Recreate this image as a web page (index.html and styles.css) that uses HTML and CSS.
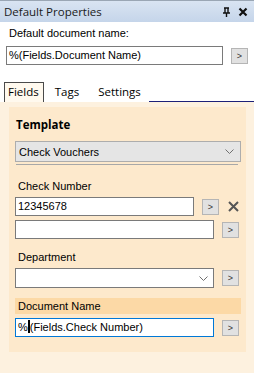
FILE: index.html
```html
<!DOCTYPE html>
<html>
<head>
<meta charset="utf-8">
<link rel="stylesheet" href="styles.css">
</head>
<body>
<div class="window">
  <div class="titlebar">
    <span class="title">Default Properties</span>
    <span class="title-icons">
      <svg class="pin" width="9" height="10" viewBox="0 0 9 10"><path d="M2 1h5M3 1v5M6 1v5M1 6h7M4.5 6v4" stroke="#111" stroke-width="1.4" fill="none"/></svg>
      <svg class="close" width="10" height="10" viewBox="0 0 10 10"><path d="M1.5 1.5l7 7M8.5 1.5l-7 7" stroke="#111" stroke-width="2.2"/></svg>
    </span>
  </div>
  <div class="top">
    <div class="top-label">Default document name:</div>
    <div class="row">
      <div class="input top-input">%(Fields.Document Name)</div>
      <div class="btn">&gt;</div>
    </div>
  </div>
  <div class="tabs">
    <div class="tab active">Fields</div>
    <div class="tab">Tags</div>
    <div class="tab">Settings</div>
    <div class="tab-line"></div>
  </div>
  <div class="page">
    <div class="panel">
      <div class="section-title">Template</div>
      <div class="select gray">
        <span>Check Vouchers</span>
        <svg width="9" height="5" viewBox="0 0 9 5"><path d="M0.5 0.5l4 4 4-4" stroke="#707070" fill="none"/></svg>
      </div>
      <div class="sep"></div>
      <div class="label first">Check Number</div>
      <div class="row">
        <div class="input short">12345678</div>
        <div class="btn">&gt;</div>
        <svg class="xicon" width="11" height="11" viewBox="0 0 11 11"><path d="M1 1l9 9M10 1l-9 9" stroke="#555" stroke-width="2"/></svg>
      </div>
      <div class="row row2">
        <div class="input"></div>
        <div class="btn">&gt;</div>
      </div>
      <div class="label dept">Department</div>
      <div class="row">
        <div class="select white">
          <span></span>
          <svg width="9" height="5" viewBox="0 0 9 5"><path d="M0.5 0.5l4 4 4-4" stroke="#707070" fill="none"/></svg>
        </div>
        <div class="btn">&gt;</div>
      </div>
      <div class="highlight">Document Name</div>
      <div class="row">
        <div class="input focused">%<span class="caret"></span>(Fields.Check Number)</div>
        <div class="btn">&gt;</div>
      </div>
    </div>
  </div>
</div>
</body>
</html>
```
FILE: styles.css
```css
html, body {
  margin: 0;
  padding: 0;
}
body {
  width: 254px;
  height: 373px;
  overflow: hidden;
  background: #ffffff;
  font-family: "Liberation Sans", Arial, sans-serif;
  font-size: 11px;
  color: #000;
}
.window {
  width: 254px;
  height: 373px;
  display: flex;
  flex-direction: column;
}
.titlebar {
  height: 21px;
  border-top: 1px solid #9aa6b4;
  background: linear-gradient(#d9e4f2, #c5d5ea);
  display: flex;
  align-items: center;
  justify-content: space-between;
  padding: 0 6px 0 4px;
  box-sizing: content-box;
}
.title {
  font-family: "Open Sans", sans-serif;
  font-size: 11.5px;
  color: #1a1a1a;
}
.title-icons {
  display: flex;
  align-items: center;
  gap: 7px;
}
.top {
  padding: 3px 6px 0 6px;
}
.top-label {
  padding-left: 3px;
  height: 16px;
  line-height: 16px;
}
.row {
  display: flex;
  align-items: center;
}
.top .row {
  margin-top: 5px;
  height: 19px;
}
.input {
  box-sizing: border-box;
  height: 19px;
  width: 199px;
  border: 1px solid #7a7a7a;
  background: #fff;
  line-height: 17px;
  padding-left: 2px;
  white-space: nowrap;
  overflow: hidden;
}
.top-input {
  width: 217px;
}
.btn {
  box-sizing: border-box;
  width: 17px;
  height: 16px;
  margin-left: 8px;
  border: 1px solid #b5b5b5;
  background: #e1e1e1;
  font-size: 9px;
  line-height: 14px;
  text-align: center;
  color: #333;
}
.tabs {
  margin-top: 17px;
  height: 20px;
  display: flex;
  align-items: flex-end;
  padding-left: 4px;
}
.tab {
  height: 19px;
  line-height: 18px;
  font-family: "Open Sans", sans-serif;
  font-size: 11.5px;
  padding: 0 8px 0 11px;
  box-sizing: border-box;
}
.tab.active {
  border: 1px solid #4a4a4a;
  border-bottom: none;
  background: #fff9ee;
  padding: 0 4px 0 3px;
  height: 20px;
}
.tab-line {
  flex: 1;
  height: 1px;
  background: #1d2078;
}
.page {
  flex: 1;
  background: #fdf1df;
  padding: 5px 8px 0 9px;
}
.panel {
  background: #fde9cc;
  height: 245px;
  padding: 9px 5px 0 6px;
  box-sizing: border-box;
}
.section-title {
  font-weight: bold;
  font-family: "Open Sans", sans-serif;
  font-size: 11.5px;
  padding-left: 1px;
  height: 17px;
  line-height: 17px;
}
.select {
  box-sizing: border-box;
  height: 21px;
  display: flex;
  align-items: center;
  justify-content: space-between;
  padding: 0 6px 0 3px;
  border: 1px solid #adadad;
}
.select.gray {
  margin-top: 8px;
  width: 226px;
  background: #e5e5e5;
}
.select.white {
  width: 199px;
  height: 20px;
  background: #fff;
  border-color: #7a7a7a;
  padding-right: 5px;
}
.sep {
  margin: 2px 2px 0 1px;
  height: 1px;
  background: #a8a8a8;
  width: 222px;
}
.label {
  margin-top: 10px;
  height: 16px;
  line-height: 16px;
  padding-left: 3px;
}
.label.first {
  margin-top: 13px;
}
.label + .row {
  margin-top: 3px;
}
.input.short {
  width: 179px;
}
.row2 {
  margin-top: 4px;
}
.xicon {
  margin-left: 9px;
}
.label.dept {
  margin-top: 10px;
}
.highlight {
  margin-top: 10px;
  width: 226px;
  height: 16px;
  line-height: 16px;
  padding-left: 3px;
  box-sizing: border-box;
  background: #fcd9a6;
}
.highlight + .row {
  margin-top: 4px;
}
.input.focused {
  border-color: #0078d7;
}
.caret {
  display: inline-block;
  width: 2px;
  height: 13px;
  background: #000;
  vertical-align: -2px;
}
```
